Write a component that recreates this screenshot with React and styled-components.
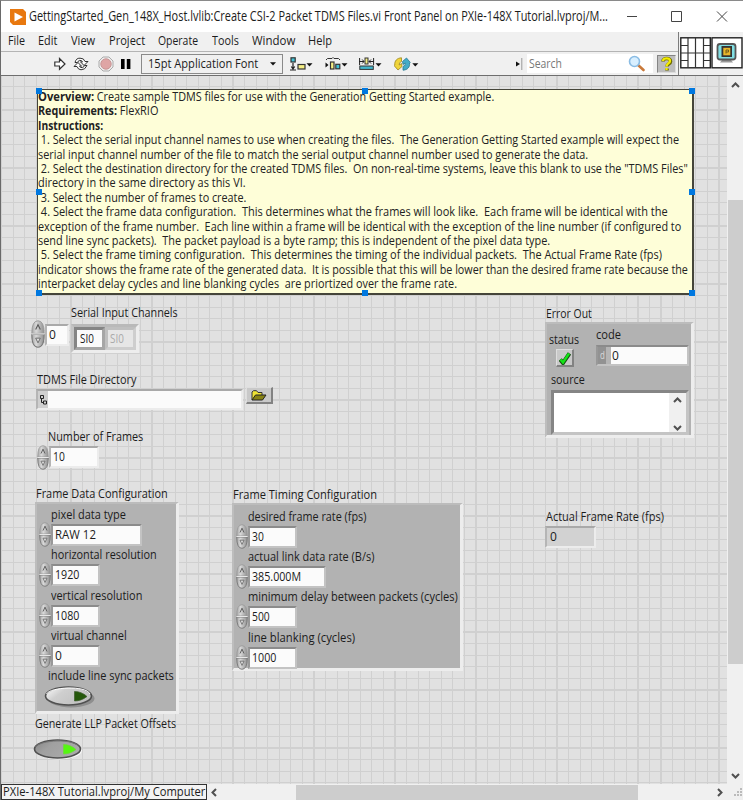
import React, { useLayoutEffect, useRef, useState } from "react";
import styled, { createGlobalStyle, css } from "styled-components";

const GlobalStyle = createGlobalStyle`
  * { box-sizing: border-box; }
  body { margin: 0; overflow: hidden; background: #f0f0f0; }
  svg { display: block; flex: none; }
`;

const Window = styled.div`
  width: 743px;
  height: 800px;
  display: flex;
  flex-direction: column;
  background: #f0f0f0;
  border-left: 1px solid #6a6a6a;
  border-top: 1px solid #8a8a8a;
  font: 12px/16px "Open Sans", "Noto Sans", sans-serif;
  color: #1c1c1c;
  overflow: hidden;
`;

/* Text condensed to a fixed run length */
const FitBox = styled.span`
  display: inline-block;
  flex: none;
  width: ${(p) => p.$w}px;
  height: ${(p) => p.$h || 16}px;
  line-height: ${(p) => p.$h || 16}px;
  font-size: ${(p) => p.$size || 12}px;
  margin-left: ${(p) => p.$ml || 0}px;
  margin-top: ${(p) => p.$mt || 0}px;
  color: ${(p) => p.$color || "inherit"};
  white-space: pre;
`;
const FitInner = styled.span`
  display: inline-block;
  transform-origin: 0 50%;
`;
function Fit({ w, h, size, ml, mt, color, children }) {
  const ref = useRef(null);
  const [scale, setScale] = useState(1);
  useLayoutEffect(() => {
    if (ref.current.offsetWidth) setScale(w / ref.current.offsetWidth);
  }, [w]);
  return (
    <FitBox $w={w} $h={h} $size={size} $ml={ml} $mt={mt} $color={color}>
      <FitInner ref={ref} style={{ transform: `scaleX(${scale})` }}>{children}</FitInner>
    </FitBox>
  );
}

const TitleBar = styled.header`
  height: 31px;
  flex: none;
  display: flex;
  align-items: center;
  background: #fff;
  padding-left: 9px;
`;
const WindowButtons = styled.div`
  display: flex;
  align-items: center;
  margin-left: 18px;
`;

const Header = styled.div`
  height: 44px;
  flex: none;
  display: flex;
  border-bottom: 1px solid #6e6e6e;
`;
const Bars = styled.div`
  width: 679px;
  border-right: 1px solid #7c7c7c;
`;
const MenuBar = styled.nav`
  height: 19px;
  display: flex;
  align-items: center;
  padding-left: 7px;
`;
const ToolBar = styled.div`
  height: 24px;
  display: flex;
  align-items: center;
  border-top: 1px solid #b4b4b4;
`;
const FontCombo = styled.div`
  width: 142px;
  height: 20px;
  margin-left: 9px;
  padding: 0 6px 0 6px;
  border: 1px solid #8a8a8a;
  display: flex;
  align-items: center;
  justify-content: space-between;
`;
const SearchField = styled.div`
  width: 126px;
  height: 19px;
  background: #fff;
  margin-left: 4px;
  display: flex;
  align-items: center;
  justify-content: space-between;
  padding: 0 8px 0 2px;
`;
const HelpButton = styled.div`
  width: 19px;
  height: 18px;
  margin-left: 4px;
  background: #bdbdbd;
  border: 1px solid #858585;
  border-right-color: #ddd;
  border-bottom-color: #ddd;
`;
const ViIcons = styled.div`
  padding: 5px 0 0 1px;
  display: flex;
`;

const Body = styled.div`
  flex: 1;
  display: flex;
  min-height: 0;
`;
const Panel = styled.main`
  width: 727px;
  padding: 13px 0 0 33px;
  background-color: #e1e1e1;
  background-image: repeating-linear-gradient(to right, #d0d0d0 0 1.2px, transparent 1.2px 11.57px),
    repeating-linear-gradient(to bottom, transparent 0 10.2px, #d0d0d0 10.2px 11.4px, transparent 11.4px 11.6px);
  border-right: 1px solid #f0f0f0;
`;
const Comment = styled.section`
  position: relative;
  width: 657px;
  height: 206px;
  margin-left: 3px;
  background: #fefed8;
  border: 1px solid #45453a;
  border-width: 1px 2px 2px 1px;
  color: #222;
`;
const Line = styled.div`
  height: 14.4px;
  display: flex;
`;
const Handle = styled.i`
  position: absolute;
  width: 6px;
  height: 6px;
  background: #0078e0;
  left: ${(p) => p.$x}px;
  top: ${(p) => p.$y}px;
`;
const Controls = styled.div`
  display: flex;
`;
const LeftColumn = styled.div`
  width: 511px;
  display: flex;
  flex-direction: column;
`;
const RightColumn = styled.div`
  display: flex;
  flex-direction: column;
`;
const Row = styled.div`
  display: flex;
  height: ${(p) => p.$h}px;
  margin-left: ${(p) => p.$ml || 0}px;
`;

const Well = styled.div`
  width: ${(p) => p.$w}px;
  height: ${(p) => p.$h || 22}px;
  margin: ${(p) => p.$mt || 0}px 0 0 ${(p) => p.$ml || 0}px;
  flex: none;
  display: flex;
  align-items: center;
  background: ${(p) => p.$bg || "#fbfbfb"};
  border: 2px solid;
  border-color: #a9a9a9 #ececec #ececec #b5b5b5;
  ${(p) =>
    p.$dark &&
    css`
      border-color: #8b8b8b #c3c3c3 #c3c3c3 #989898;
    `}
`;
const Cluster = styled.section`
  width: ${(p) => p.$w}px;
  height: ${(p) => p.$h}px;
  background: #b2b2b2;
  border: 3px solid;
  border-color: #bcbcbc #ededed #ededed #bdbdbd;
  border-top-width: 2px;
  border-left-width: 2px;
  display: flex;
  flex-direction: column;
`;
const Field = styled.div`
  height: ${(p) => p.$h}px;
  display: flex;
  flex-direction: column;
`;
const Titled = styled.div`
  display: flex;
  flex-direction: column;
  margin-left: ${(p) => p.$ml || 0}px;
`;
const ArrayShell = styled.div`
  display: flex;
  width: 68px;
  height: 29px;
  margin: 3px 0 0 2px;
  border: 3px solid;
  border-color: #b9b9b9 #ededed #ededed #c4c4c4;
`;
const Element = styled.div`
  display: flex;
  align-items: center;
  width: 31px;
  height: 23px;
  background: ${(p) => (p.$off ? "#e6e6e6" : "#fafafa")};
  border: 3px solid;
  border-color: ${(p) => (p.$off ? "#bfbfbf #cecece #cecece #bfbfbf" : "#858585 #a6a6a6 #a6a6a6 #858585")};
`;
const BevelButton = styled.div`
  width: ${(p) => p.$w}px;
  height: ${(p) => p.$h}px;
  margin: ${(p) => p.$mt || 0}px 0 0 ${(p) => p.$ml || 0}px;
  background: #c9c9c9;
  border: 1px solid #dedede;
  border-right: 2px solid #828282;
  border-bottom: 2px solid #828282;
  display: flex;
  align-items: center;
  justify-content: center;
`;
const ErrorTop = styled.div`
  display: flex;
  height: 48px;
`;
const Radix = styled.span`
  width: 13px;
  height: 100%;
  background: #929292;
  color: #ddd;
  line-height: 15px;
  padding-left: 2px;
  border-right: 5px solid #b5b5b5;
`;
const SourceBox = styled.div`
  width: 138px;
  height: 45px;
  margin: 2px 0 0 4px;
  background: #fff;
  border: 3px solid;
  border-color: #858585 #c4c4c4 #c4c4c4 #858585;
  display: flex;
  justify-content: flex-end;
`;
const SourceScroll = styled.div`
  width: 17px;
  background: #f0f0f0;
  display: flex;
  flex-direction: column;
  align-items: center;
  justify-content: space-between;
  padding: 3px 0 0;
`;

const VScroll = styled.aside`
  width: 15px;
  background: #f0f0f0;
  display: flex;
  flex-direction: column;
  align-items: center;
  padding: 5px 0 4px;
`;
const VThumb = styled.div`
  width: 15px;
  height: 464px;
  margin: 110px 0 auto;
  background: #cdcdcd;
`;
const Footer = styled.footer`
  height: 16px;
  flex: none;
  display: flex;
  align-items: center;
  background: #f0f0f0;
`;
const Context = styled.div`
  width: 207px;
  height: 16px;
  border: 1px solid #333;
  padding-left: 1px;
  background: #f3f3f3;
  display: flex;
  align-items: center;
`;
const HThumb = styled.div`
  width: 344px;
  height: 15px;
  margin: 0 75px 0 77px;
  background: #cdcdcd;
`;

function Chevron({ dir }) {
  const d = {
    up: "M1 6 4.5 2.5 8 6",
    down: "M1 3 4.5 6.5 8 3",
    left: "M6 1 2.5 4.5 6 8",
    right: "M3 1 6.5 4.5 3 8",
  }[dir];
  return (
    <svg width="9" height="9" viewBox="0 0 9 9">
      <path d={d} fill="none" stroke="#505050" strokeWidth="2" />
    </svg>
  );
}

const KnobSvg = styled.svg`
  margin-top: ${(p) => p.$mt}px;
`;
function Knob({ h = 25, w = 12, mt = 0 }) {
  return (
    <KnobSvg $mt={mt} width={w} height={h} viewBox="0 0 12 25" preserveAspectRatio="none">
      <defs>
        <linearGradient id="knob">
          <stop offset="0" stopColor="#a5a5a5" />
          <stop offset="0.35" stopColor="#d8d8d8" />
          <stop offset="1" stopColor="#909090" />
        </linearGradient>
      </defs>
      <path d="M.7 12Q.7 .7 6 .7T11.3 12Z" fill="url(#knob)" stroke="#999" strokeWidth=".8" />
      <path d="M.7 13Q.7 24.3 6 24.3T11.3 13Z" fill="url(#knob)" stroke="#777" strokeWidth=".9" />
      <path d="M.5 12.5H11.5" stroke="#f0f0f0" strokeWidth=".9" />
      <path d="M4 8.5 6 4.2 8 8.5" fill="none" stroke="#555" strokeWidth=".9" />
      <path d="M4 16.2H8L6 20.4Z" fill="#ddd" stroke="#666" strokeWidth=".8" />
    </KnobSvg>
  );
}

const ToggleSvg = styled.svg`
  margin: ${(p) => p.$mt}px 0 0 ${(p) => p.$ml}px;
`;
function Toggle({ on, mt, ml }) {
  const id = on ? "on" : "off";
  return (
    <ToggleSvg $mt={mt} $ml={ml} width="52" height="24" viewBox="0 0 52 24">
      <defs>
        <linearGradient id={id} x1="0" y1="0" x2="1" y2=".5">
          <stop offset="0" stopColor={on ? "#858585" : "#fff"} />
          <stop offset=".4" stopColor={on ? "#a0a0a0" : "#cfcfcf"} />
          <stop offset="1" stopColor={on ? "#aaa" : "#c0c0c0"} />
        </linearGradient>
      </defs>
      <ellipse cx={on ? 25.5 : 27} cy={on ? 12.5 : 13.5} rx="23.5" ry="9" fill={on ? "#fff" : "#858585"} opacity=".8" />
      <ellipse cx="24.5" cy="11" rx="23" ry="9" fill={`url(#${id})`} stroke="#505050" strokeWidth="1.6" />
      <path d="M2.5 9C6 2 42 0 46 9" fill="none" stroke={on ? "#777" : "#fff"} strokeWidth="1" />
      <path
        d="M30.5 6.5C35 6.5 39 8 43 11.5 39 14.5 35 16 30.5 16Z"
        fill={on ? "#55f611" : "#25580b"}
        stroke={on ? "#6ddb38" : "#3c5a2c"}
        strokeWidth=".7"
      />
    </ToggleSvg>
  );
}

const ToolSvg = styled.svg`
  margin-left: ${(p) => p.$ml}px;
`;
const ScrollArrow = styled.span`
  margin-left: ${(p) => p.$ml || 0}px;
`;
function RunIcon() {
  return (
    <ToolSvg $ml={53} width="12" height="14" viewBox="0 0 12 14">
      <path d="M.8 5H5.5V1.5L11 7 5.5 12.3V9H.8Z" fill="#fff" stroke="#333" strokeWidth="1.2" />
    </ToolSvg>
  );
}
function RunLoopIcon() {
  return (
    <ToolSvg $ml={7} width="16" height="14" viewBox="0 0 16 14">
      <path d="M2 5.5Q3 1 7 1.2 11 1 12 4.5H15L11 8.5 7.5 4.8H9.6Q8.5 3 6.5 3.4 5 3.8 4.6 5.5Z" fill="#fff" stroke="#333" />
      <path d="M14 8.5Q12 13 8 12.8 5 12.6 4 9.5H1L5 5.5 8.5 9.2H6.4Q7.5 11 9.5 10.6 11 10.2 11.4 8.5Z" fill="#fff" stroke="#333" />
    </ToolSvg>
  );
}
function AbortIcon() {
  return (
    <ToolSvg $ml={9} width="16" height="16" viewBox="0 0 16 16">
      <path d="M5 1H11L15 5V11L11 15H5L1 11V5Z" fill="#eee" stroke="#aaa" />
      <circle cx="8" cy="8" r="5.2" fill="#dfa5a5" stroke="#c89696" />
    </ToolSvg>
  );
}
function PauseIcon() {
  return (
    <ToolSvg $ml={7} width="11" height="12" viewBox="0 0 11 12">
      <path d="M0 1H3.6V11H0ZM5.8 1H9.4V11H5.8Z" fill="#000" />
    </ToolSvg>
  );
}
function Caret() {
  return (
    <svg width="6" height="4" viewBox="0 0 6 4">
      <path d="M0 .3H6L3 3.6Z" fill="#111" />
    </svg>
  );
}
const dropPath = "M16.5 6.2H22.5L19.5 9.6Z";
function AlignIcon() {
  return (
    <ToolSvg $ml={7} width="23" height="14" viewBox="0 0 23 14">
      <rect x="1" y=".8" width="4.200" height="4.200" fill="#42c3d6" stroke="#333" strokeWidth="1.200" />
      <path d="M0 13H6M3 6V12M1.3 9.500 3 12 4.700 9.500" fill="none" stroke="#222" strokeWidth="1.200" />
      <rect x="8" y="7.500" width="7" height="4.500" fill="#f4ee84" stroke="#333" strokeWidth="1.200" />
      <path d={dropPath} fill="#111" />
    </ToolSvg>
  );
}
function DistributeIcon() {
  return (
    <ToolSvg $ml={12} width="23" height="14" viewBox="0 0 23 14">
      <path d="M1 3 2.5 1.500H7L8 .5 9 1.500H13.500L15 3" fill="none" stroke="#333" />
      <path d="M.5 5.500 3.500 8 .5 10.500ZM0 8H4" fill="#111" />
      <rect x="5.500" y="5" width="3.500" height="7" fill="#f4ee84" stroke="#333" strokeWidth="1.200" />
      <rect x="10.800" y="7.300" width="4" height="4.500" fill="#42c3d6" stroke="#333" strokeWidth="1.200" />
      <path d={dropPath} fill="#111" />
    </ToolSvg>
  );
}
function ResizeIcon() {
  return (
    <ToolSvg $ml={11} width="23" height="14" viewBox="0 0 23 14">
      <path d="M.6 1V8M14.6 1V8M0 4.500H5M15 4.500H10M3.200 2.500 5 4.500 3.200 6.500M12 2.500 10 4.500 12 6.500" fill="none" stroke="#222" />
      <rect x="6" y="1" width="3" height="6" fill="#f4ee84" stroke="#333" />
      <rect x=".8" y="9" width="13.500" height="3.400" fill="#42b6cc" stroke="#333" />
      <path d={dropPath} fill="#111" />
    </ToolSvg>
  );
}
function ReorderIcon() {
  return (
    <ToolSvg $ml={12} width="25" height="14" viewBox="0 0 25 14">
      <path d="M7.5 .8C3 1 .3 4 .8 8L0 8.500 4 13 8 9.500 7.500 6.500 5.200 8Q4.800 5.300 7.500 4.500Z" fill="#f0d43a" stroke="#9c861b" strokeWidth=".8" />
      <path d="M9 13.200C13.500 13 16.200 10 15.500 6L16.300 5.500 12.500 1 8.500 4.500 9 7.500 11.300 6Q11.800 8.700 9 9.500Z" fill="#43acc8" stroke="#2a7892" strokeWidth=".8" />
      <path d="M18.3 6.200H24.300L21.300 9.600Z" fill="#111" />
    </ToolSvg>
  );
}

function Numeric({ w, text, tw, dark, ml = 2 }) {
  return (
    <Row $h={24} $ml={ml}>
      <Knob mt={-1} />
      <Well $w={w} $mt={1} $dark={dark}>
        <Fit w={tw} ml={2}>{text}</Fit>
      </Well>
    </Row>
  );
}

const lines = [
  [[56, "Overview:", true], [400, " Create sample TDMS files for use with the Generation Getting Started example."]],
  [[79, "Requirements:", true], [41, " FlexRIO"]],
  [[65, "Instructions:", true]],
  [[641, " 1. Select the serial input channel names to use when creating the files.  The Generation Getting Started example will expect the"]],
  [[550, "serial input channel number of the file to match the serial output channel number used to generate the data."]],
  [[650, " 2. Select the destination directory for the created TDMS files.  On non-real-time systems, leave this blank to use the \"TDMS Files\""]],
  [[208, "directory in the same directory as this VI."]],
  [[208, " 3. Select the number of frames to create."]],
  [[630, " 4. Select the frame data configuration.  This determines what the frames will look like.  Each frame will be identical with the"]],
  [[643, "exception of the frame number.  Each line within a frame will be identical with the exception of the line number (if configured to"]],
  [[512, "send line sync packets).  The packet payload is a byte ramp; this is independent of the pixel data type."]],
  [[624, " 5. Select the frame timing configuration.  This determines the timing of the individual packets.  The Actual Frame Rate (fps)"]],
  [[650, "indicator shows the frame rate of the generated data.  It is possible that this will be lower than the desired frame rate because the"]],
  [[419, "interpacket delay cycles and line blanking cycles  are priortized over the frame rate."]],
];

const menus = [
  ["File", 17, 0], ["Edit", 19, 13], ["View", 24, 14], ["Project", 36, 14],
  ["Operate", 40, 13], ["Tools", 27, 14], ["Window", 43, 13], ["Help", 24, 13],
];

const dataFields = [
  ["pixel data type", 75, 91, "RAW 12", 41],
  ["horizontal resolution", 106, 49, "1920", 24],
  ["vertical resolution", 91, 49, "1080", 24],
  ["virtual channel", 76, 49, "0", 7],
];
const timingFields = [
  ["desired frame rate (fps)", 118, 49, "30", 12],
  ["actual link data rate (B/s)", 126, 78, "385.000M", 49],
  ["minimum delay between packets (cycles)", 210, 49, "500", 18],
  ["line blanking (cycles)", 107, 49, "1000", 24],
];

export default function App() {
  return (
    <Window>
      <GlobalStyle />
      <TitleBar>
        <svg width="16" height="16" viewBox="0 0 16 16">
          <path d="M0 0H13L16 3V16H3L0 13Z" fill="#e8780f" />
          <path d="M4.5 3.5 13 8 4.5 12.5Z" fill="#fff" />
        </svg>
        <Fit w={579} ml={3} mt={-1} h={20} size={14}>
          GettingStarted_Gen_148X_Host.lvlib:Create CSI-2 Packet TDMS Files.vi Front Panel on PXIe-148X Tutorial.lvproj/M...
        </Fit>
        <WindowButtons>
          <svg width="110" height="12" viewBox="0 0 110 12">
            <path d="M1 5.500H11M45.500 .5H55.500V10.500H45.500ZM91 .5 101 10.500M101 .5 91 10.500" fill="none" stroke="#444" />
          </svg>
        </WindowButtons>
      </TitleBar>
      <Header>
        <Bars>
          <MenuBar>
            {menus.map(([t, w, ml]) => <Fit key={t} w={w} ml={ml} mt={-1}>{t}</Fit>)}
          </MenuBar>
          <ToolBar>
            <RunIcon />
            <RunLoopIcon />
            <AbortIcon />
            <PauseIcon />
            <FontCombo>
              <Fit w={110}>15pt Application Font</Fit>
              <Caret />
            </FontCombo>
            <AlignIcon />
            <DistributeIcon />
            <ResizeIcon />
            <ReorderIcon />
            <ToolSvg $ml={97} width="7" height="12" viewBox="0 0 7 12">
              <path d="M0 3.500 4 6 0 8.500Z" fill="#111" />
              <path d="M5.800 0V12" stroke="#999" />
            </ToolSvg>
            <SearchField>
              <Fit w={33} color="#777">Search</Fit>
              <svg width="17" height="17" viewBox="0 0 17 17">
                <path d="M10 10 15.500 15" stroke="#c9793a" strokeWidth="2.600" strokeLinecap="round" />
                <circle cx="6.500" cy="6.500" r="5" fill="#d8efff" stroke="#8abce4" strokeWidth="1.600" />
              </svg>
            </SearchField>
            <HelpButton>
              <svg width="17" height="16" viewBox="0 0 17 16">
                <path d="M5 5.500C5 1.500 12.500 1.500 12.500 5.500 12.500 8 9 7.500 9 10.500M9 12.500V14.500" fill="none" stroke="#6d6a00" strokeWidth="3.600" />
                <path d="M5 5C5 1.500 12 1.500 12 5 12 7.500 8.500 7.500 8.500 10.500M8.500 12V14" fill="none" stroke="#f4ed00" strokeWidth="2.300" />
              </svg>
            </HelpButton>
          </ToolBar>
        </Bars>
        <ViIcons>
          <svg width="31" height="32" viewBox="0 0 31 32">
            <rect x=".8" y=".8" width="29.500" height="30" fill="#fff" stroke="#222" strokeWidth="1.400" />
            <path d="M8 1V31M15.500 1V31M23.500 1V31M1 16H30M1 8.500H8M1 23.500H8M23.500 8.500H30M23.500 23.500H30" stroke="#333" strokeWidth="1.200" />
          </svg>
          <svg width="32" height="32" viewBox="0 0 32 32">
            <rect x="1" y=".8" width="30" height="30" fill="#fff" stroke="#222" strokeWidth="1.400" />
            <path d="M11 23H20L22 25.500H9Z" fill="#999" />
            <rect x="6.500" y="7" width="18" height="15.500" rx="2.500" fill="#82e0e4" stroke="#555" strokeWidth="1.800" />
            <rect x="10.500" y="9" width="10.500" height="11" fill="#333" />
            <rect x="12.300" y="10.800" width="7" height="7.500" fill="#e9b62a" />
            <path d="M15 16.500V13H17.500V15H15" fill="none" stroke="#755d18" />
          </svg>
        </ViIcons>
      </Header>
      <Body>
        <Panel>
          <Comment>
            {lines.map((parts, i) => (
              <Line key={i}>
                {parts.map(([w, t, bold]) => (
                  <Fit key={t} w={w} h={14.4}>{bold ? <b>{t}</b> : t}</Fit>
                ))}
              </Line>
            ))}
            {[-2, 324, 651].map((x) =>
              [-2, 99, 200].map((y) => (x === 324 && y === 99 ? null : <Handle key={`${x},${y}`} $x={x} $y={y} />))
            )}
          </Comment>
          <Controls>
            <LeftColumn>
              <Fit w={107} ml={37} mt={10}>Serial Input Channels</Fit>
              <Row $h={51} $ml={-3}>
                <Knob w={14} h={28} mt={-1} />
                <Well $w={24} $mt={3}><Fit w={7} ml={2}>0</Fit></Well>
                <ArrayShell>
                  <Element><Fit w={14} ml={3} h={17}>SI0</Fit></Element>
                  <Element $off><Fit w={14} ml={2} h={17} color="#aaa">SI0</Fit></Element>
                </ArrayShell>
              </Row>
              <Fit w={99} ml={3}>TDMS File Directory</Fit>
              <Row $h={41} $ml={2}>
                <Well $w={207} $h={21} $mt={1}>
                  <svg width="10" height="17" viewBox="0 0 10 17">
                    <path d="M0 0H10V17H0Z" fill="#cfcfcf" />
                    <path d="M2.500 4.500H5.500V7.500H2.500ZM5.500 10H8.500V13H5.500ZM3.500 7.500V11.500H5.500" fill="none" stroke="#222" />
                  </svg>
                </Well>
                <BevelButton $w={27} $h={17} $ml={3} $mt={-1}>
                  <svg width="16" height="11" viewBox="0 0 16 11">
                    <path d="M1 10V2L2.500 .7H5.500L7 2.500H11V5" fill="#eee334" stroke="#333" />
                    <path d="M1 10 4.500 5H15L11.500 10Z" fill="#878214" stroke="#222" />
                  </svg>
                </BevelButton>
              </Row>
              <Fit w={95} ml={14}>Number of Frames</Fit>
              <Row $h={41} $ml={3}>
                <Knob w={12} h={25} />
                <Well $w={50} $mt={1}><Fit w={12} ml={2}>10</Fit></Well>
              </Row>
              <Row $h={230} $ml={1}>
                <Titled>
                  <Fit w={132} ml={1}>Frame Data Configuration</Fit>
                  <Cluster $w={144} $h={212}>
                    {dataFields.map(([l, lw, w, t, tw]) => (
                      <Field key={l} $h={40.3}>
                        <Fit w={lw} ml={14} mt={3}>{l}</Fit>
                        <Numeric w={w} text={t} tw={tw} dark />
                      </Field>
                    ))}
                    <Fit w={126} ml={11} mt={3}>include line sync packets</Fit>
                    <Toggle mt={1} ml={7} />
                  </Cluster>
                </Titled>
                <Titled $ml={53}>
                  <Fit w={144} ml={1} mt={1}>Frame Timing Configuration</Fit>
                  <Cluster $w={231} $h={168}>
                    {timingFields.map(([l, lw, w, t, tw]) => (
                      <Field key={l} $h={40.2}>
                        <Fit w={lw} ml={14} mt={4}>{l}</Fit>
                        <Numeric w={w} text={t} tw={tw} dark />
                      </Field>
                    ))}
                  </Cluster>
                </Titled>
              </Row>
              <Fit w={141} ml={1}>Generate LLP Packet Offsets</Fit>
              <Toggle on mt={6} ml={-1} />
            </LeftColumn>
            <RightColumn>
              <Fit w={46} ml={1} mt={11}>Error Out</Fit>
              <Cluster $w={149} $h={116}>
                <ErrorTop>
                  <Titled $ml={2}>
                    <Fit w={30} mt={8}>status</Fit>
                    <BevelButton $w={18} $h={18} $ml={7} $mt={1}>
                      <svg width="12" height="14" viewBox="0 0 12 14">
                        <path d="M1.200 8.500 4 12 10.500 2.500" fill="none" stroke="#174d13" strokeWidth="4" />
                        <path d="M1.500 8.500 4 11.500 10 2.500" fill="none" stroke="#13e516" strokeWidth="2.400" />
                      </svg>
                    </BevelButton>
                  </Titled>
                  <Titled $ml={17}>
                    <Fit w={25} mt={3}>code</Fit>
                    <Well $dark $w={93} $h={21} $mt={2}>
                      <Radix><Fit w={5} h={15} size={11}>d</Fit></Radix>
                      <Fit w={7} ml={1}>0</Fit>
                    </Well>
                  </Titled>
                </ErrorTop>
                <Fit w={34} ml={4} mt={1}>source</Fit>
                <SourceBox>
                  <SourceScroll><Chevron dir="up" /><Chevron dir="down" /></SourceScroll>
                </SourceBox>
              </Cluster>
              <Fit w={118} ml={1} mt={71}>Actual Frame Rate (fps)</Fit>
              <Well $w={51} $h={22} $mt={1} $bg="#d2d2d2"><Fit w={7} ml={3}>0</Fit></Well>
            </RightColumn>
          </Controls>
        </Panel>
        <VScroll>
          <Chevron dir="up" />
          <VThumb />
          <Chevron dir="down" />
        </VScroll>
      </Body>
      <Footer>
        <Context><Fit w={202} h={14}>PXIe-148X Tutorial.lvproj/My Computer</Fit></Context>
        <ScrollArrow $ml={3}><Chevron dir="left" /></ScrollArrow>
        <HThumb />
        <ScrollArrow $ml={2}><Chevron dir="right" /></ScrollArrow>
        <ToolSvg $ml={10} width="9" height="9" viewBox="0 0 9 9">
          <path d="M6 0H8V2H6ZM3 3H5V5H3ZM6 3H8V5H6ZM0 6H2V8H0ZM3 6H5V8H3ZM6 6H8V8H6Z" fill="#bbb" />
        </ToolSvg>
      </Footer>
    </Window>
  );
}
